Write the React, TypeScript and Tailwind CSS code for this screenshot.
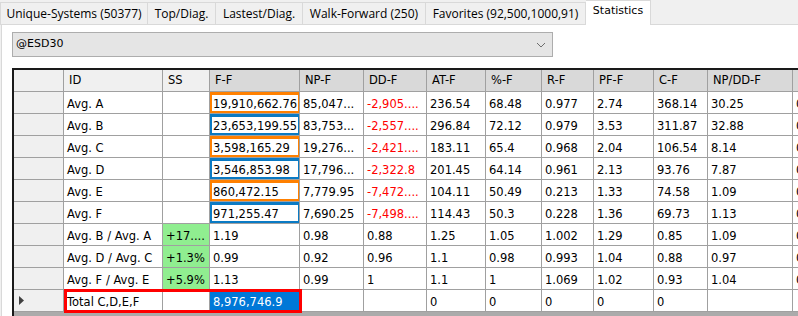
import type { ReactNode } from "react";

type Box = "orange" | "blue";

type Row = {
  cells: string[];
  box?: Box;
  ratio?: boolean;
  red?: boolean;
  total?: boolean;
};

// ------------ 통계 표 데이터
const headers = ["", "ID", "SS", "F-F", "NP-F", "DD-F", "AT-F", "%-F", "R-F", "PF-F", "C-F", "NP/DD-F", ""];

const rows: Row[] = [
  { cells: ["Avg. A", "", "19,910,662.76", "85,047...", "-2,905....", "236.54", "68.48", "0.977", "2.74", "368.14", "30.25", "0.9"], box: "orange", red: true },
  { cells: ["Avg. B", "", "23,653,199.55", "83,753...", "-2,557....", "296.84", "72.12", "0.979", "3.53", "311.87", "32.88", "0.9"], box: "blue", red: true },
  { cells: ["Avg. C", "", "3,598,165.29", "19,276...", "-2,421....", "183.11", "65.4", "0.968", "2.04", "106.54", "8.14", "0.9"], box: "orange", red: true },
  { cells: ["Avg. D", "", "3,546,853.98", "17,796...", "-2,322.8", "201.45", "64.14", "0.961", "2.13", "93.76", "7.87", "0.9"], box: "blue", red: true },
  { cells: ["Avg. E", "", "860,472.15", "7,779.95", "-7,472....", "104.11", "50.49", "0.213", "1.33", "74.58", "1.09", "0.9"], box: "orange", red: true },
  { cells: ["Avg. F", "", "971,255.47", "7,690.25", "-7,498....", "114.43", "50.3", "0.228", "1.36", "69.73", "1.13", "0.9"], box: "blue", red: true },
  { cells: ["Avg. B / Avg. A", "+17....", "1.19", "0.98", "0.88", "1.25", "1.05", "1.002", "1.29", "0.85", "1.09", "0.9"], ratio: true },
  { cells: ["Avg. D / Avg. C", "+1.3%", "0.99", "0.92", "0.96", "1.1", "0.98", "0.993", "1.04", "0.88", "0.97", "0.9"], ratio: true },
  { cells: ["Avg. F / Avg. E", "+5.9%", "1.13", "0.99", "1", "1.1", "1", "1.069", "1.02", "0.93", "1.04", "0.9"], ratio: true },
  { cells: ["Total C,D,E,F", "", "8,976,746.9", "", "", "0", "0", "0", "0", "0", "", ""], total: true },
];

const tabs = [
  { label: "Unique-Systems (50377)", w: "w-[148px] border-l" },
  { label: "Top/Diag.", w: "w-[68px]" },
  { label: "Lastest/Diag.", w: "w-[87px]" },
  { label: "Walk-Forward (250)", w: "w-[123px]" },
  { label: "Favorites (92,500,1000,91)", w: "w-[160px]" },
];

const gridCols =
  "grid grid-cols-[50px_99px_47px_90px_64px_63px_59px_56px_52px_60px_54px_85px_60px]";

const Tabs = () => (
  <div className="flex h-[25px]">
    {tabs.map((t) => (
      <div
        key={t.label}
        className={`${t.w} mt-[2px] h-[23px] flex items-center justify-center pt-px border-t border-r border-b border-[#d9d9d9] bg-[#f0f0f0] font-['Open_Sans',sans-serif] text-[12px] whitespace-nowrap`}
      >
        {t.label}
      </div>
    ))}
    {/* 선택된 탭 */}
    <div className="w-[65px] h-[25px] flex items-center justify-center pb-[4px] bg-white border-t border-r border-[#d9d9d9] text-[11px]">
      Statistics
    </div>
    <div className="flex-1 border-b border-[#d9d9d9]" />
  </div>
);

const Combo = () => (
  <div className="w-[541px] h-[25px] flex items-center justify-between pl-[3px] pr-[5px] bg-[#e5e5e5] border border-[#adadad] text-[11px]">
    <span>@ESD30</span>
    <svg width="10" height="6" viewBox="0 0 10 6" className="mr-px">
      <polyline points="1,1 5,5 9,1" fill="none" stroke="#6d6d6d" strokeWidth="1" />
    </svg>
  </div>
);

const Cell = ({ children, className = "" }: { children?: ReactNode; className?: string }) => (
  <div
    className={`relative h-[22px] flex items-center pt-[4px] pl-[3px] border-r border-b border-[#a0a0a0] whitespace-nowrap overflow-hidden ${className}`}
  >
    {children}
  </div>
);

const DataRow = ({ row }: { row: Row }) => (
  <div className={`${gridCols} relative bg-white`}>
    {/* 행 헤더 */}
    <div className="h-[22px] flex items-center pl-[5px] bg-[#f0f0f0] border-r border-b border-[#a0a0a0]">
      {row.total && (
        <svg width="6" height="9" viewBox="0 0 6 9">
          <polygon points="0,0 5,4.5 0,9" fill="#404040" />
        </svg>
      )}
    </div>
    {row.cells.map((c, i) => {
      let cls = "";
      if (i === 1 && row.ratio) cls = "bg-[#90ee90]";
      if (i === 4 && row.red) cls = "text-[#ff0000]";
      if (i === 2 && row.total) cls = "bg-[#0078d7] text-white";
      if (i === 11) cls = "overflow-hidden";
      return (
        <Cell key={i} className={cls}>
          {c}
          {i === 2 && row.box && (
            <div
              className={`absolute left-[-1px] right-[-2px] top-0 bottom-[-1px] border-[3px] ${
                row.box === "orange" ? "border-[#ff8000]" : "border-[#0a7ac4]"
              }`}
            />
          )}
        </Cell>
      );
    })}
    {/* 합계 행 강조 박스 */}
    {row.total && (
      <div className="absolute left-[50px] top-[-1px] w-[238px] h-[24px] border-[3px] border-[#ff0000]" />
    )}
  </div>
);

const Grid = () => (
  <div className="mt-[11px] w-[900px] h-[248px] bg-[#ababab] border-t-2 border-l-2 border-[#1a1a1a] overflow-hidden">
    <div className={gridCols}>
      {headers.map((h, i) => (
        <div
          key={i}
          className={`h-[22px] flex items-center pl-[5px] border-r border-b border-[#a0a0a0] ${
            i < 3 ? "bg-[#f0f0f0]" : "bg-[#d9d9d9]"
          }`}
        >
          {h}
        </div>
      ))}
    </div>
    {rows.map((r, i) => (
      <DataRow key={i} row={r} />
    ))}
  </div>
);

export default function App() {
  return (
    <div className="w-[798px] h-[316px] overflow-hidden bg-[#f0f0f0] font-['DejaVu_Sans',sans-serif] text-[11.5px] text-black">
      <Tabs />
      <div className="ml-px h-[291px] bg-white border-l border-[#d9d9d9] pt-[7px] pl-[10px] overflow-hidden">
        <Combo />
        <Grid />
      </div>
    </div>
  );
}
